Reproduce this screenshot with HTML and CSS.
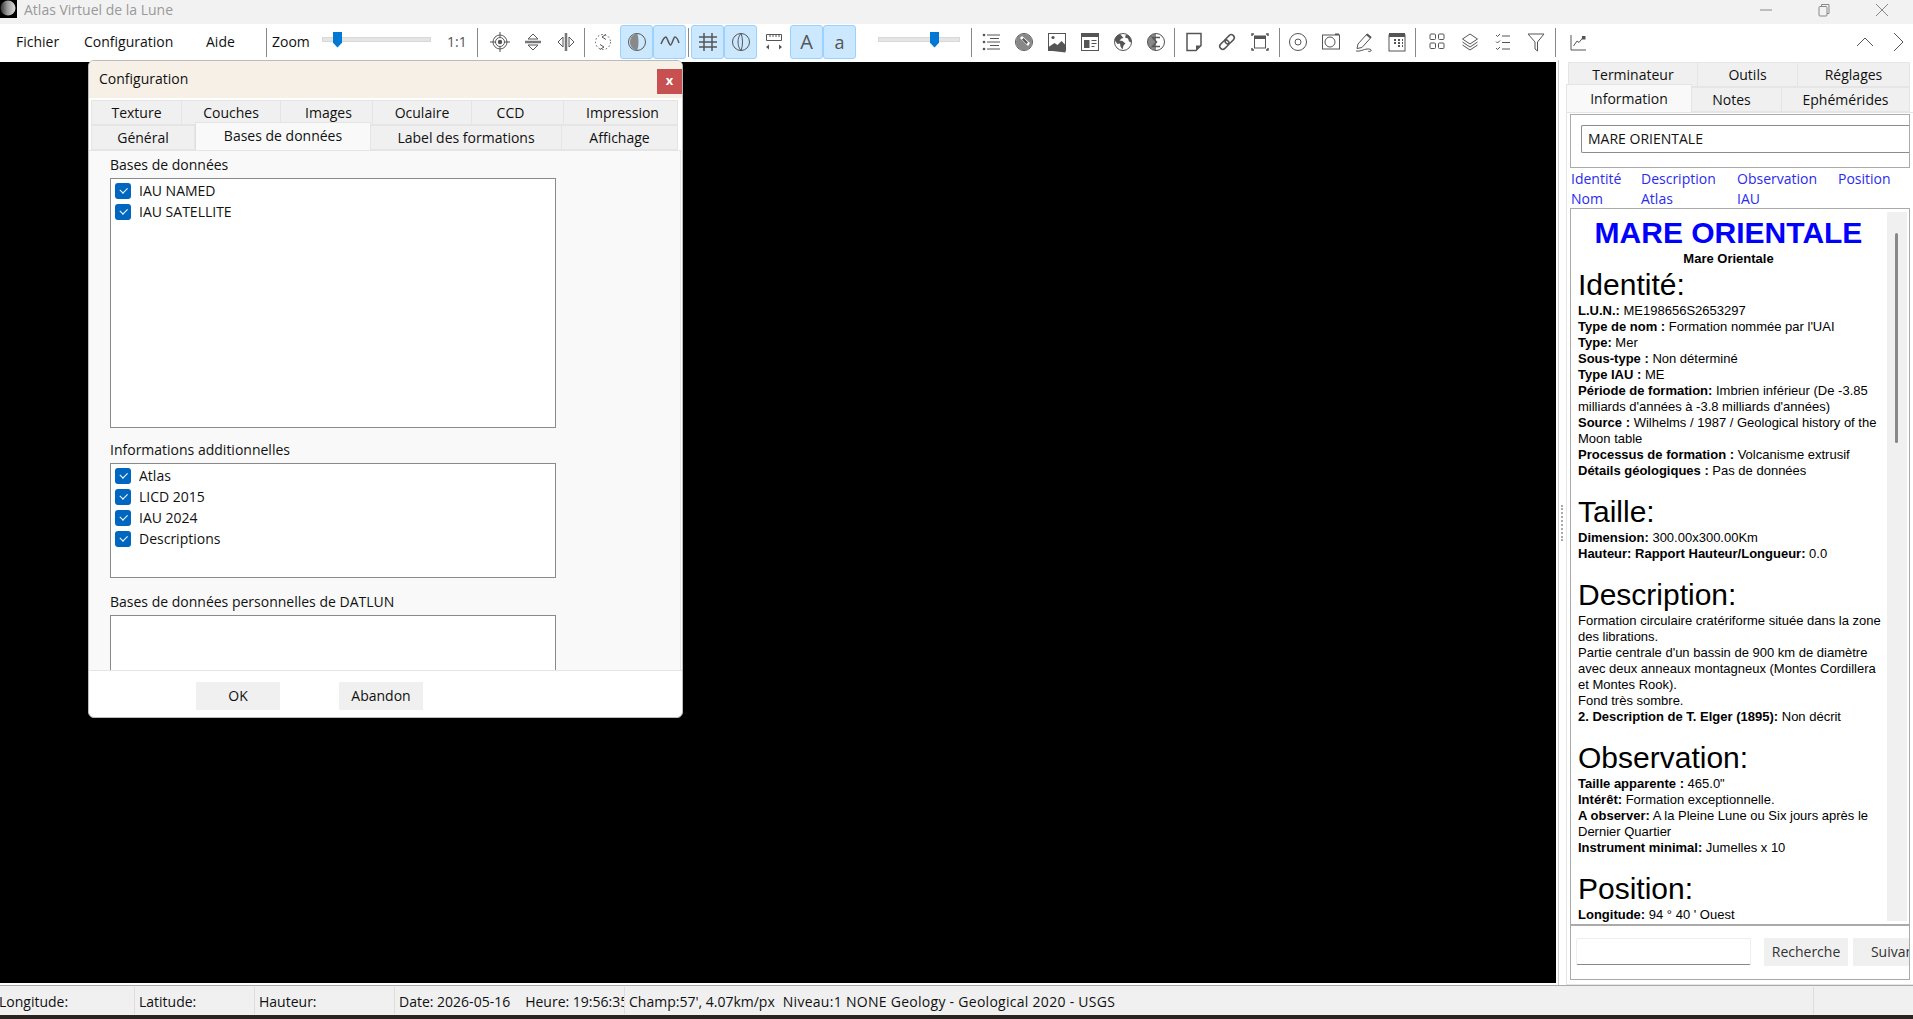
FILE: index.html
```html
<!DOCTYPE html>
<html lang="fr">
<head>
<meta charset="utf-8">
<title>Atlas Virtuel de la Lune</title>
<link rel="stylesheet" href="styles.css">
</head>
<body>
<header class="titlebar">
  <svg class="logo" viewBox="0 0 17 18"><defs><linearGradient id="moon" x1="0" x2="1"><stop offset="0" stop-color="#333"/><stop offset=".45" stop-color="#999"/><stop offset="1" stop-color="#ddd"/></linearGradient></defs><rect width="17" height="18" fill="#000"/><circle cx="8" cy="8" r="7.5" fill="url(#moon)"/></svg>
  <span class="app-title">Atlas Virtuel de la Lune</span>
  <div class="winctl">
    <svg viewBox="0 0 14 14"><path d="M1 7h12"/></svg>
    <svg viewBox="0 0 14 14"><rect x="2" y="3.500" width="8" height="9.500" rx="1"/><path d="M4.500 3.500V1.500h7.500v9h-2"/></svg>
    <svg viewBox="0 0 14 14"><path d="M1 1l12 12M13 1L1 13"/></svg>
  </div>
</header>

<nav class="toolbar">
  <div class="menus"><span>Fichier</span><span>Configuration</span><span>Aide</span></div>
  <i class="sep sep-first"></i>
  <span class="zoom-label">Zoom</span>
  <div class="slider slider-zoom"><b></b></div>
  <span class="ratio">1:1</span>
  <i class="sep sep-ratio"></i>
  <button class="tool ml5"><svg viewBox="0 0 24 24"><circle cx="12" cy="12" r="7"/><circle cx="12" cy="12" r="4.500"/><circle class="f" cx="12" cy="12" r="2.200"/><path d="M12 2v5M12 17v5M2 12h5M17 12h5"/></svg></button>
  <button class="tool"><svg viewBox="0 0 24 24"><path class="thick" d="M4 12h16"/><path d="M12 4l5 5H7zM12 20l5-5H7z"/></svg></button>
  <button class="tool"><svg viewBox="0 0 24 24"><path class="thick" d="M12 3v18"/><path d="M4 12l5-5v10zM20 12l-5-5v10z"/></svg></button>
  <i class="sep"></i>
  <button class="tool mln1"><svg viewBox="0 0 24 24"><circle cx="12" cy="12" r="7.500" stroke-dasharray="1.500 2.200"/><path d="M15 4.500l-4 2.500 4 2.500M9 14.500l4 2.500-4 2.500"/></svg></button>
  <button class="tool on ml1"><svg viewBox="0 0 24 24"><circle cx="12" cy="12" r="8.500"/><path class="g" d="M12 3.500c-4 1-7 4-7 8.500s3 7.500 7 8.500c2-3 2-14 0-17z"/></svg></button>
  <button class="tool on"><svg viewBox="0 0 24 24"><path class="s15" d="M3 14c2-5 4-7 5-7s3 8 4.500 8 3-8 4.500-8 3 3 4 6"/></svg></button>
  <i class="sep"></i>
  <button class="tool on"><svg viewBox="0 0 24 24"><path class="s15" d="M8 3v18M16 3v18M3 7h18M3 12h18M3 17h18"/></svg></button>
  <button class="tool on"><svg viewBox="0 0 24 24"><circle cx="12" cy="12" r="8.500"/><path d="M12 3.500c-4 4-4 13 0 17M12 3.500c2 4 2 13 0 17"/></svg></button>
  <button class="tool"><svg viewBox="0 0 24 24"><path d="M4.500 4.500h15v6h-15zM8 4.500v2.500M11 4.500v2.500M14 4.500v2.500M17 4.500v2.500"/><path class="f" d="M4 17l3-2.500v5zM20 17l-3-2.500v5z"/></svg></button>
  <button class="tool on letter">A</button>
  <button class="tool on letter small">a</button>
  <div class="slider slider-light"><b></b></div>
  <i class="sep"></i>
  <button class="tool"><svg viewBox="0 0 24 24"><circle class="f" cx="5" cy="5" r="1.300"/><circle class="f" cx="5" cy="12" r="1.300"/><circle class="f" cx="5" cy="19" r="1.300"/><path d="M8 5h13M11 8.500h9M8 12h13M11 15.500h9M8 19h13"/></svg></button>
  <button class="tool"><svg viewBox="0 0 24 24"><circle class="g" cx="12" cy="12" r="8"/><circle cx="12" cy="12" r="8.500"/><path class="fw" d="M8 8l2-2 8 7-2 3z"/><path class="f" d="M10 9.500l1.500-1.500 4.500 4.500-1.500 1.500z"/></svg></button>
  <button class="tool"><svg viewBox="0 0 24 24"><rect x="3.500" y="3.500" width="17" height="17"/><path class="f" d="M3.500 20.500V17l6-4 3 2 4-4 4 4v7.500z"/><circle class="f" cx="8" cy="7.500" r="1.600"/></svg></button>
  <button class="tool"><svg viewBox="0 0 24 24"><rect x="3.500" y="3.500" width="17" height="17"/><path class="f" d="M3.500 3.500h17v3.500h-17zM6 10h5.500v8H6z"/><path d="M13.500 10.500h5M13.500 13.500h5M13.500 16.500h3"/></svg></button>
  <button class="tool"><svg viewBox="0 0 24 24"><circle cx="12" cy="12" r="8.500"/><path class="f" d="M9 4c-3 1-5 3-5.500 6l3 4 2.500-.5.500 3 2 3 1-4 2-2-3-2.500-3-.5 2-2 2-.5zM15 4.500l-1 3 3 1 1 3 2.500 1c.5-3-1.500-7-5.500-8z"/></svg></button>
  <button class="tool"><svg viewBox="0 0 24 24"><circle class="g" cx="12" cy="12" r="8.500"/><path class="fw" d="M12 3.500a8.500 8.500 0 0 1 0 17z"/><circle cx="12" cy="12" r="8.500"/><path class="s15" d="M16 7.500H8.500l4 4.500-4 4.500H16"/></svg></button>
  <i class="sep"></i>
  <button class="tool"><svg viewBox="0 0 24 24"><path class="s15" d="M5 3.500h14v12l-5 5H5z"/><path class="f" d="M14 20.500v-5h5z"/></svg></button>
  <button class="tool"><svg viewBox="0 0 24 24"><g class="s15" transform="rotate(-45 12 12)"><rect x="3" y="9" width="10.500" height="6" rx="3"/><rect x="10.500" y="9" width="10.500" height="6" rx="3"/></g></svg></button>
  <button class="tool"><svg viewBox="0 0 24 24"><rect x="6.500" y="6" width="11" height="12"/><path class="f" d="M6.500 6h11v3h-11z"/><path class="s15" d="M4 6V4h2M18 4h2v2M20 18v2h-2M6 20H4v-2"/></svg></button>
  <i class="sep sep-tight"></i>
  <button class="tool mln1"><svg viewBox="0 0 24 24"><circle cx="12" cy="12" r="8.500"/><circle cx="12" cy="12" r="3"/></svg></button>
  <button class="tool"><svg viewBox="0 0 24 24"><rect x="3.500" y="5" width="17" height="14"/><circle cx="11" cy="12" r="5"/><path class="f" d="M16 3.500h4v1.500h-4z"/></svg></button>
  <button class="tool"><svg viewBox="0 0 24 24"><path d="M6 14L15 4l4 3.500-9 10-5 1z"/><path class="f" d="M14 5l1.500-1.500L19.500 7 18 8.500z"/><path d="M4 21c4 1 8-2 11-2 3-.5 5 1 4 2-2 1-3 0-3 0"/></svg></button>
  <button class="tool"><svg viewBox="0 0 24 24"><rect x="4" y="5" width="16" height="16"/><path class="f" d="M4 3h16v4H4z"/><path class="dots" d="M9 10h2M13 10h2M17 10h1M9 13h2M13 13h2M17 13h1M13 16h2M17 16h1"/></svg></button>
  <i class="sep"></i>
  <button class="tool ml4"><svg viewBox="0 0 24 24"><rect x="5" y="4" width="5.500" height="5.500" rx="1"/><rect x="13.500" y="4" width="5.500" height="5.500" rx="1"/><rect x="5" y="13" width="5.500" height="5.500" rx="1"/><rect x="13.500" y="13" width="5.500" height="5.500" rx="1"/></svg></button>
  <button class="tool"><svg viewBox="0 0 24 24"><path d="M12 4l7.500 5-7.500 5-7.500-5zM4.500 12l7.500 5 7.500-5M4.500 15l7.500 5 7.500-5"/></svg></button>
  <button class="tool"><svg viewBox="0 0 24 24"><path d="M5 5l1.500 1.500L9 4M5 11.500L6.500 13 9 10.500M5 18l1.500 1.500L9 17M11 6h8M11 12.500h8M11 19h8"/></svg></button>
  <button class="tool"><svg viewBox="0 0 24 24"><path d="M4 4h16l-6.500 8v9l-2.500-2v-7z"/></svg></button>
  <i class="sep sep-chart"></i>
  <button class="tool ml5"><svg viewBox="0 0 24 24"><path d="M5 5v15h15"/><path d="M7.500 16l3.500-5 2 1.500 4-5"/><rect class="f" x="16" y="6" width="3.500" height="3.500"/></svg></button>
  <button class="tool push"><svg viewBox="0 0 24 24"><path d="M4 16l8-8 8 8"/></svg></button>
  <button class="tool last"><svg viewBox="0 0 24 24"><path d="M8 3l9 9-9 9"/></svg></button>
</nav>

<main class="workspace">
  <div class="viewport"></div>
  <aside class="panel">
    <i class="grip"></i>
    <div class="tabs panel-row1"><span>Terminateur</span><span>Outils</span><span>Réglages</span></div>
    <div class="tabs panel-row2"><span class="sel">Information</span><span class="nudge-l">Notes</span><span>Ephémérides</span></div>
    <div class="pane">
      <div class="namebox"><div class="nameinput">MARE ORIENTALE</div></div>
      <div class="links">
        <a>Identité</a><a>Description</a><a>Observation</a><a>Position</a>
        <a>Nom</a><a>Atlas</a><a>IAU</a>
      </div>
      <div class="browser">
        <article class="doc">
          <h1>MARE ORIENTALE</h1>
          <h4>Mare Orientale</h4>
          <div class="body">
            <h2 class="first">Identité:</h2>
            <p><b>L.U.N.:</b> ME198656S2653297</p>
            <p><b>Type de nom :</b> Formation nommée par l'UAI</p>
            <p><b>Type:</b> Mer</p>
            <p><b>Sous-type :</b> Non déterminé</p>
            <p><b>Type IAU :</b> ME</p>
            <p><b>Période de formation:</b> Imbrien inférieur (De -3.85 milliards d'années à -3.8 milliards d'années)</p>
            <p><b>Source :</b> Wilhelms / 1987 / Geological history of the Moon table</p>
            <p><b>Processus de formation :</b> Volcanisme extrusif</p>
            <p><b>Détails géologiques :</b> Pas de données</p>
            <h2>Taille:</h2>
            <p><b>Dimension:</b> 300.00x300.00Km</p>
            <p><b>Hauteur: Rapport Hauteur/Longueur:</b> 0.0</p>
            <h2>Description:</h2>
            <p>Formation circulaire cratériforme située dans la zone des librations.</p>
            <p>Partie centrale d'un bassin de 900 km de diamètre avec deux anneaux montagneux (Montes Cordillera et Montes Rook).</p>
            <p>Fond très sombre.</p>
            <p><b>2. Description de T. Elger (1895):</b> Non décrit</p>
            <h2>Observation:</h2>
            <p><b>Taille apparente :</b> 465.0"</p>
            <p><b>Intérêt:</b> Formation exceptionnelle.</p>
            <p><b>A observer:</b> A la Pleine Lune ou Six jours après le Dernier Quartier</p>
            <p><b>Instrument minimal:</b> Jumelles x 10</p>
            <h2>Position:</h2>
            <p><b>Longitude:</b> 94 ° 40 ' Ouest</p>
          </div>
        </article>
        <div class="scroll"><b></b></div>
      </div>
      <div class="searchbox">
        <div class="searchinput"></div>
        <span class="btn btn-search">Recherche</span>
        <span class="btn btn-next">Suivant</span>
      </div>
    </div>
  </aside>
</main>

<footer class="status">
  <span class="cell c1">Longitude:</span>
  <span class="cell c2">Latitude:</span>
  <span class="cell c3">Hauteur:</span>
  <span class="cell c4">Date: 2026-05-16<span class="heure">Heure: 19:56:35</span></span>
  <span class="cell c5">Champ:57', 4.07km/px<span class="niveau">Niveau:1 NONE Geology - Geological 2020 - USGS</span></span>
  <span class="cell c6"></span>
</footer>

<section class="dialog">
  <div class="dlg-head"><span>Configuration</span><b class="close">x</b></div>
  <div class="tabs dlg-row1"><span>Texture</span><span>Couches</span><span class="nudge-r">Images</span><span>Oculaire</span><span class="nudge-ccd">CCD</span><span class="nudge-r">Impression</span></div>
  <div class="tabs dlg-row2"><span>Général</span><span class="sel">Bases de données</span><span>Label des formations</span><span>Affichage</span></div>
  <div class="dlg-body">
    <div class="grp-label">Bases de données</div>
    <ul class="list list-a">
      <li><i class="check"></i>IAU NAMED</li>
      <li><i class="check"></i>IAU SATELLITE</li>
    </ul>
    <div class="grp-label lab-b">Informations additionnelles</div>
    <ul class="list list-b">
      <li><i class="check"></i>Atlas</li>
      <li><i class="check"></i>LICD 2015</li>
      <li><i class="check"></i>IAU 2024</li>
      <li><i class="check"></i>Descriptions</li>
    </ul>
    <div class="grp-label lab-c">Bases de données personnelles de DATLUN</div>
    <ul class="list list-c"></ul>
  </div>
  <div class="dlg-foot"><span class="btn">OK</span><span class="btn">Abandon</span></div>
</section>
</body>
</html>
```

FILE: styles.css
```css
* { box-sizing: border-box; }
html, body { margin: 0; height: 1019px; overflow: hidden; }
body {
  position: relative;
  display: flex;
  flex-direction: column;
  font: 14px/20px "Open Sans", sans-serif;
  color: #111;
  background: #fff;
}

/* title bar */
.titlebar { height: 24px; flex: none; background: #f2f2f2; display: flex; align-items: flex-start; }
.logo { width: 17px; height: 18px; }
.app-title { margin-left: 7px; color: #999; line-height: 19px; }
.winctl { margin-left: auto; display: flex; gap: 44px; padding: 3px 24px 0 0; }
.winctl svg { width: 14px; height: 14px; fill: none; stroke: #888; stroke-width: 1; }

/* toolbar */
.toolbar { height: 36px; flex: none; display: flex; align-items: center; background: #fff; position: relative; }
.menus { display: grid; grid-template-columns: 68px 122px 60px; padding-left: 16px; }
.sep { display: block; width: 1px; height: 29px; background: #888; margin: 0 2px; flex: none; }
.sep-first { margin: 0; }
.zoom-label { margin-left: 5px; width: 50px; }
.slider { height: 5px; background: #e3e6e4; border: 1px solid #d8d8d8; position: relative; margin-top: -6px; flex: none; }
.slider b { position: absolute; top: -6px; width: 9px; height: 16px; background: #0078d4; clip-path: polygon(0 0, 100% 0, 100% 70%, 50% 100%, 0 70%); }
.slider-zoom { width: 109px; }
.slider-zoom b { left: 10px; }
.slider-light { width: 82px; margin-left: 22px; margin-right: 9px; }
.slider-light b { left: 51px; }
.ratio { margin-left: 16px; width: 21px; color: #555; }
.sep-ratio { margin-left: 9px; margin-right: 0; }
.tool { width: 33px; height: 34px; padding: 0; margin: 0; flex: none; background: none; border: 1px solid transparent; border-radius: 3px; display: flex; align-items: center; justify-content: center; font: inherit; }
.tool svg { width: 24px; height: 24px; fill: none; stroke: #555; stroke-width: 1; }
.tool.on { background: #cce8ff; border: 1px solid #99d1ff; }
.tool.letter { font-size: 20px; color: #555; }
.tool.letter.small { font-size: 18px; }
.mln1 { margin-left: -1px; }
.ml1 { margin-left: 1px; }
.ml4 { margin-left: 2px; }
.ml5 { margin-left: 5px; }
.sep-tight { margin-left: 3px; margin-right: 2px; }
.sep-chart { margin-left: 3px; margin-right: 0; }
.push { margin-left: auto; }
.last { margin-right: -1px; }
svg .f { fill: #555; stroke: none; }
svg .g { fill: #888; stroke: none; }
svg .fw { fill: #fff; stroke: none; }
svg .s15 { stroke-width: 1.500; }
svg .thick { stroke-width: 2.500; stroke: #777; }
svg .dots { stroke-width: 2; }

/* workspace */
.workspace { flex: none; height: 925px; display: flex; }
.viewport { width: 1556px; margin: 2px 0; background: #000; }
.panel { flex: 1; padding-top: 2px; position: relative; overflow: hidden; border-left: 1px solid #ccc; margin-left: 2px; }
.grip { position: absolute; left: 2px; top: 445px; width: 2px; height: 36px; border-left: 2px dotted #aaa; }

.tabs { display: grid; font-size: 14px; }
.tabs span { background: #f0f0f0; border: 1px solid #e5e5e5; border-left: 0; text-align: center; height: 25px; line-height: 23px; }
.tabs span:first-child { border-left: 1px solid #e5e5e5; }
.tabs .sel { background: #f9f9f9; height: 28px; margin-top: -3px; border-left: 1px solid #e0e0e0; border-bottom: 0; line-height: 26px; position: relative; }
.tabs .nudge-l { padding-right: 10px; }
.tabs .nudge-r { padding-left: 4px; }
.tabs .nudge-ccd { padding-right: 14px; }

.panel-row1 { margin-left: 9px; grid-template-columns: 130px 100px 112px; }
.panel-row2 { margin-left: 7px; grid-template-columns: 126px 90px 128px; }
.panel-row2 .sel { line-height: 27px; }

.pane { margin-left: 7px; height: 873px; border: 1px solid #e5e5e5; border-right: 0; padding: 1px 0 0 3px; }
.namebox { width: 340px; height: 54px; border: 1px solid #aaa; padding: 10px 0 0 10px; overflow: hidden; }
.nameinput { height: 28px; border: 1px solid #8c8c8c; border-right: 0; border-radius: 2px 0 0 2px; padding-left: 6px; line-height: 26px; white-space: nowrap; }
.links { height: 40px; display: grid; grid-template-columns: 70px 96px 101px 70px; padding: 1px 0 0 1px; }
.links a { color: #2a2af0; line-height: 20px; }

.browser { width: 340px; height: 718px; border: 1px solid #aaa; border-bottom-width: 2px; display: flex; overflow: hidden; }
.doc { flex: 1; min-width: 0; padding-top: 6px; font: 13px/16px "Liberation Sans", Arial, sans-serif; color: #000; overflow: hidden; }
.doc h1 { margin: 0; font-size: 30px; line-height: 36px; font-weight: 700; color: #0000ff; text-align: center; }
.doc h4 { margin: 0; font-size: 13px; line-height: 16px; font-weight: 700; text-align: center; }
.doc .body { padding-left: 7px; }
.doc h2 { margin: 15px 0 0; font-size: 30px; line-height: 36px; font-weight: 400; }
.doc h2.first { margin-top: 0; }
.doc p { margin: 0; }
.scroll { width: 20px; flex: none; margin: 3px 2px 3px 1px; background: #f0f0f0; padding: 21px 0 0 8px; }
.scroll b { display: block; width: 3px; height: 210px; background: #888; border-radius: 2px; }

.searchbox { width: 340px; height: 54px; border: 1px solid #aaa; border-top: 0; display: flex; align-items: flex-start; padding-top: 12px; overflow: hidden; }
.searchinput { width: 175px; height: 27px; margin-left: 5px; flex: none; border: 1px solid #eee; border-bottom: 1px solid #888; border-radius: 2px; }
.btn { display: block; flex: none; height: 28px; background: #f0f0f0; text-align: center; line-height: 28px; }
.btn-search { width: 84px; margin-left: 13px; color: #333; }
.btn-next { width: 84px; margin-left: 5px; color: #333; }

/* status bar */
.status { flex: none; height: 34px; border-top: 1px solid #aaa; border-bottom: 4px solid #2a2320; background: #f0f0f0; display: flex; font-size: 14px; line-height: 29px; }
.cell { border-right: 1px solid #ddd; margin: 1px 0; white-space: nowrap; overflow: hidden; }
.c1 { width: 135px; padding-left: 0; text-indent: -1px; }
.c2 { width: 120px; padding-left: 4px; }
.c3 { width: 140px; padding-left: 4px; }
.c4 { width: 230px; padding-left: 4px; }
.c5 { width: 1189px; padding-left: 4px; }
.c6 { flex: 1; border-right: 0; }
.heure { margin-left: 15px; }
.niveau { margin-left: 8px; letter-spacing: .28px; }

/* dialog */
.dialog { position: absolute; left: 88px; top: 60px; width: 595px; height: 658px; background: #fff; border: 1px solid #bbb; border-radius: 6px; display: flex; flex-direction: column; overflow: hidden; }
.dlg-head { height: 37px; flex: none; background: #f7f0e7; display: flex; justify-content: space-between; align-items: flex-start; padding-left: 10px; line-height: 35px; }
.close { width: 25px; height: 25px; margin-top: 8px; background: #c75050; color: #fff; text-align: center; line-height: 23px; font-size: 13px; }
.dlg-row1 { margin: 2px 0 0 2px; grid-template-columns: 91px 99px 92px 99px 92px 114px; }
.dlg-row2 { margin-left: 2px; grid-template-columns: 104px 176px 191px 116px; }
.dlg-body { height: 520px; flex: none; width: 592px; background: #f9f9f9; border-top: 1px solid #e5e5e5; border-right: 1px solid #e5e5e5; padding: 4px 0 0 21px; overflow: hidden; }
.grp-label { line-height: 20px; }
.list { list-style: none; margin: 3px 0 0; width: 446px; background: #fff; border: 1px solid #8a8a8a; padding: 4px 0 0 4px; }
.list li { height: 21px; display: flex; align-items: flex-start; line-height: 15px; }
.list-a { height: 250px; }
.lab-b { margin-top: 12px; }
.list-b { height: 115px; margin-top: 3px; }
.lab-c { margin-top: 14px; }
.list-c { height: 150px; margin-top: 3px; }
.check { width: 16px; height: 16px; flex: none; margin-right: 8px; background: #0067c0; border-radius: 3px; position: relative; }
.check::after { content: ""; position: absolute; left: 5px; top: 4px; width: 6px; height: 3.500px; border-left: 1px solid #fff; border-bottom: 1px solid #fff; transform: rotate(-45deg); }
.dlg-foot { flex: 1; display: flex; gap: 59px; padding: 11px 0 0 107px; border-top: 1px solid #e5e5e5; }
.dlg-foot .btn { width: 84px; }
```
